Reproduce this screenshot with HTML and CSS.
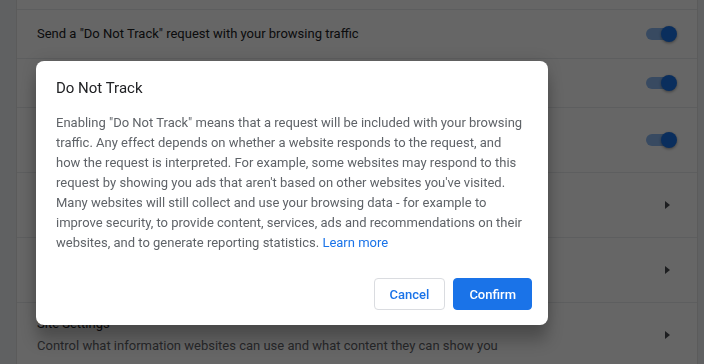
FILE: index.html
```html
<!DOCTYPE html>
<html lang="en">
<head>
<meta charset="utf-8">
<title>Do Not Track</title>
<link rel="stylesheet" href="styles.css">
</head>
<body>
<div class="page">
  <section class="card">
    <div class="row">
      <div class="label">Clear browsing data</div>
    </div>
    <div class="row">
      <div class="label">Send a "Do Not Track" request with your browsing traffic</div>
      <span class="toggle"><span class="bar"></span><span class="knob"></span></span>
    </div>
    <div class="row">
      <div class="label">Allow sites to check if you have payment methods saved</div>
      <span class="toggle"><span class="bar"></span><span class="knob"></span></span>
    </div>
    <div class="row tall">
      <div class="text">
        <div class="label">Preload pages for faster browsing and searching</div>
        <div class="sub">Uses cookies to remember your preferences, even if you don't visit those pages</div>
      </div>
      <span class="toggle"><span class="bar"></span><span class="knob"></span></span>
    </div>
    <div class="row tall">
      <div class="text">
        <div class="label">Manage certificates</div>
        <div class="sub">Manage HTTPS/SSL certificates and settings</div>
      </div>
      <span class="arrow"></span>
    </div>
    <div class="row tall">
      <div class="text">
        <div class="label">Manage security keys</div>
        <div class="sub">Reset security keys and create PINs</div>
      </div>
      <span class="arrow"></span>
    </div>
    <div class="row tall">
      <div class="text">
        <div class="label">Site Settings</div>
        <div class="sub">Control what information websites can use and what content they can show you</div>
      </div>
      <span class="arrow"></span>
    </div>
  </section>
</div>
<div class="scrim"></div>
<div class="dialog" role="dialog">
  <div class="title">Do Not Track</div>
  <div class="body">Enabling "Do Not Track" means that a request will be included with your browsing traffic. Any effect depends on whether a website responds to the request, and how the request is interpreted. For example, some websites may respond to this request by showing you ads that aren't based on other websites you've visited. Many websites will still collect and use your browsing data - for example to improve security, to provide content, services, ads and recommendations on their websites, and to generate reporting statistics. <a class="link" href="#">Learn more</a></div>
  <div class="buttons">
    <button class="btn cancel">Cancel</button>
    <button class="btn confirm">Confirm</button>
  </div>
</div>
</body>
</html>
```

FILE: styles.css
```css
html, body {
  margin: 0;
  padding: 0;
  height: 100%;
  overflow: hidden;
}
body {
  font-family: Roboto, "Liberation Sans", sans-serif;
  font-size: 13px;
  color: #202124;
  background: #f1f3f4;
}
.page {
  padding-left: 16px;
}
.card {
  width: 680px;
  background: #fff;
  border-left: 1px solid #e4e4e4;
  border-right: 1px solid #e4e4e4;
  margin-top: -40px;
}
.row {
  display: flex;
  align-items: center;
  min-height: 48px;
  padding: 0 20px;
  border-top: 1px solid #e8eaed;
}
.row:first-child {
  border-top: none;
  min-height: 49px;
}
.row.tall {
  min-height: 64px;
}
.text {
  flex: 1;
  display: flex;
  flex-direction: column;
  gap: 2px;
}
.label {
  flex: 1;
  line-height: 20px;
}
.sub {
  color: #5f6368;
  line-height: 20px;
}
.toggle {
  position: relative;
  width: 34px;
  height: 16px;
  flex: none;
  margin-left: 20px;
}
.bar {
  position: absolute;
  left: 3px;
  top: 2px;
  width: 28px;
  height: 12px;
  border-radius: 6px;
  background: #8cb9f3;
}
.knob {
  position: absolute;
  right: 0;
  top: 0;
  width: 16px;
  height: 16px;
  border-radius: 50%;
  background: #1a73e8;
  box-shadow: 0 1px 3px rgba(0,0,0,.4);
}
.arrow {
  flex: none;
  width: 0;
  height: 0;
  border-top: 4px solid transparent;
  border-bottom: 4px solid transparent;
  border-left: 5px solid #4a4d50;
  margin-right: 7px;
}
.scrim {
  position: fixed;
  inset: 0;
  background: rgba(0,0,0,.6);
}
.dialog {
  position: absolute;
  left: 36px;
  top: 61px;
  width: 512px;
  box-sizing: border-box;
  background: #fff;
  border-radius: 8px;
  box-shadow: 0 0 16px rgba(0,0,0,.12), 0 16px 16px rgba(0,0,0,.24);
}
.title {
  font-size: 15px;
  line-height: 22px;
  padding: 16px 20px 14px;
  color: #202124;
}
.body {
  padding: 0 20px;
  color: #5f6368;
  line-height: 20px;
}
.link {
  color: #1a73e8;
  text-decoration: none;
}
.buttons {
  display: flex;
  justify-content: flex-end;
  gap: 8px;
  padding: 25px 16px 15px;
}
.btn {
  font-family: Roboto, "Liberation Sans", sans-serif;
  font-size: 13px;
  font-weight: 500;
  height: 32px;
  padding: 0 15px;
  border-radius: 4px;
  border: 1px solid #dadce0;
  background: #fff;
  color: #1a73e8;
  cursor: pointer;
}
.btn.confirm {
  background: #1a73e8;
  border-color: #1a73e8;
  color: #fff;
}
```
